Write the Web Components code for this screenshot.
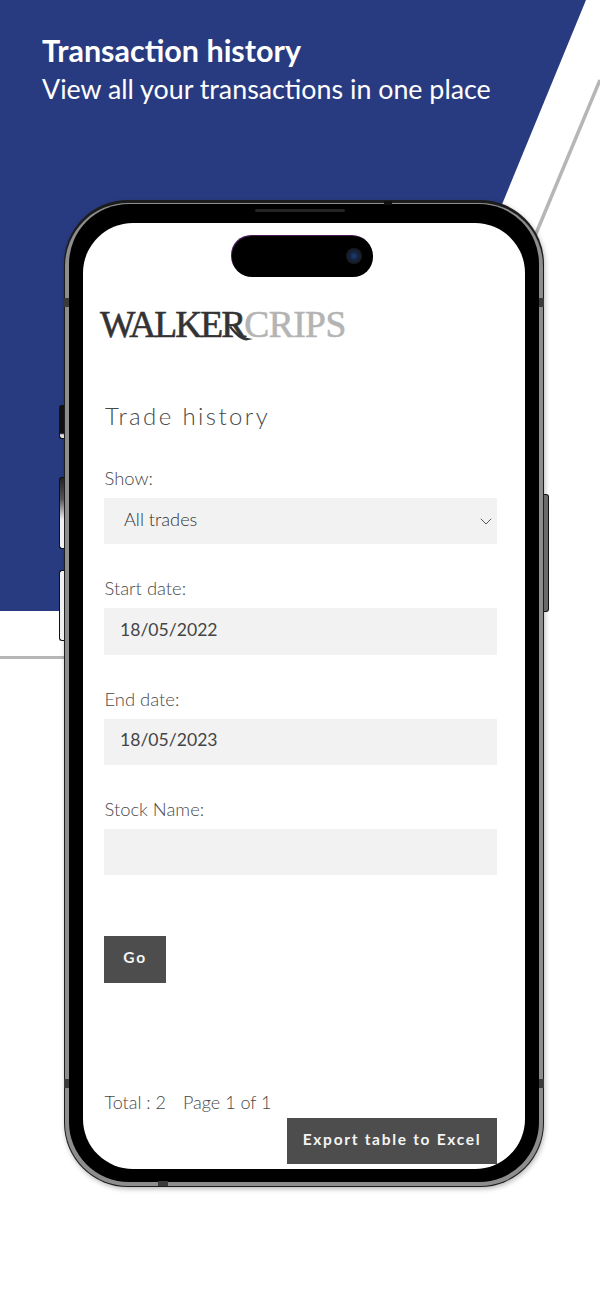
<!DOCTYPE html>
<html lang="en">
<head>
<meta charset="utf-8">
<title>Transaction history</title>
<style>
    html, body { margin: 0; padding: 0; background: #fff; }
    body { font-family: "Lato", "Noto Sans", sans-serif; }
</style>
</head>
<body>
<wc-showcase>
    <span slot="title">Transaction history</span>
    <span slot="subtitle">View all your transactions in one place</span>
    <wc-phone>
        <wc-logo></wc-logo>
        <wc-page-title>Trade history</wc-page-title>
        <wc-field label="Show:" value="All trades" select></wc-field>
        <wc-field label="Start date:" value="18/05/2022"></wc-field>
        <wc-field label="End date:" value="18/05/2023"></wc-field>
        <wc-field label="Stock Name:"></wc-field>
        <wc-button class="go">Go</wc-button>
        <wc-pager total="2" page="1" pages="1"></wc-pager>
        <wc-button class="export">Export table to Excel</wc-button>
    </wc-phone>
</wc-showcase>

<script>
class Showcase extends HTMLElement {
    constructor() {
        super();
        this.attachShadow({mode: 'open'});
        this.shadowRoot.innerHTML = `
            <style>
                :host {
                    display: block;
                    position: relative;
                    width: 600px;
                    height: 1298px;
                    overflow: hidden;
                    background: #fff;
                }
                svg.back {
                    position: absolute;
                    left: 0;
                    top: 0;
                }
                header {
                    position: relative;
                    height: 200px;
                    box-sizing: border-box;
                    padding: 32px 0 0 42px;
                    color: #fff;
                }
                h1, p {
                    margin: 0;
                    white-space: nowrap;
                }
                h1 {
                    font-size: 30.5px;
                    line-height: 37px;
                    font-weight: 700;
                }
                p {
                    font-size: 26.8px;
                    line-height: 40px;
                    font-weight: 400;
                }
                .stage {
                    position: relative;
                    padding-left: 64px;
                }
            </style>
            <svg class="back" width="600" height="1298" viewBox="0 0 600 1298">
                <polygon points="0,0 586,0 335,611 0,611" fill="#293b80"/>
                <line x1="600" y1="80" x2="530" y2="248" stroke="#b6b6b6" stroke-width="3.5"/>
                <line x1="0" y1="657.5" x2="70" y2="657.5" stroke="#b6b6b6" stroke-width="3"/>
            </svg>
            <header>
                <h1><slot name="title"></slot></h1>
                <p><slot name="subtitle"></slot></p>
            </header>
            <div class="stage"><slot></slot></div>`;
    }
}

class Phone extends HTMLElement {
    constructor() {
        super();
        this.attachShadow({mode: 'open'});
        this.shadowRoot.innerHTML = `
            <style>
                :host {
                    display: block;
                    position: relative;
                    width: 480px;
                    height: 987px;
                }
                .frame {
                    box-sizing: border-box;
                    width: 100%;
                    height: 100%;
                    padding: 3px 1px 1px 1px;
                    border-radius: 64px;
                    background: #1c1c1c;
                    box-shadow: 1px 2px 5px rgba(0,0,0,.28);
                }
                .ring {
                    box-sizing: border-box;
                    height: 100%;
                    padding: 1px 4px 4px 4px;
                    border-radius: 63px;
                    background: #8d8d8d;
                }
                .bezel {
                    box-sizing: border-box;
                    height: 100%;
                    padding: 19px 14px 13px 14px;
                    border-radius: 60px;
                    background: #000;
                }
                .screen {
                    box-sizing: border-box;
                    height: 100%;
                    padding: 0 28px 0 21px;
                    border-radius: 50px;
                    background: #fff;
                    overflow: hidden;
                }
                .key {
                    position: absolute;
                    width: 5px;
                    box-sizing: border-box;
                    border: 1.5px solid #111;
                }
                .key.left {
                    left: -5px;
                    border-right: 0;
                    border-radius: 3px 0 0 3px;
                    background: linear-gradient(#222 0, #555 30%, #f1f1f1 60%);
                }
                .key.right {
                    right: -5px;
                    background: #6a6a6a;
                    border-left: 0;
                    border-radius: 0 3px 3px 0;
                }
                .band {
                    position: absolute;
                    background: #3a3a3a;
                }
                .speaker {
                    position: absolute;
                    left: 191px;
                    top: 9px;
                    width: 90px;
                    height: 3px;
                    border-radius: 2px;
                    background: #242424;
                }
                .island {
                    position: absolute;
                    left: 168px;
                    top: 36px;
                    width: 141px;
                    height: 41px;
                    border-radius: 20px;
                    background: #000;
                    box-shadow: -1px -1px 0 #4a1a55;
                }
                .camera {
                    position: absolute;
                    right: 11px;
                    top: 12px;
                    width: 16px;
                    height: 16px;
                    border-radius: 50%;
                    background: radial-gradient(circle, #1f3f78 0, #14223c 40%, #1a1a1f 70%, #000 100%);
                }
            </style>
            <div class="key left" style="top:205px;height:34px;background:linear-gradient(#111 85%,#ddd 90%)"></div>
            <div class="key left" style="top:277px;height:72px"></div>
            <div class="key left" style="top:370px;height:71px;background:#f1f1f1"></div>
            <div class="key right" style="top:294px;height:118px"></div>
            <div class="frame"><div class="ring"><div class="bezel"><div class="screen"><slot></slot></div></div></div></div>
            <div class="band" style="left:0;top:98px;width:5px;height:9px"></div>
            <div class="band" style="right:0;top:98px;width:5px;height:9px"></div>
            <div class="band" style="left:0;top:879px;width:5px;height:9px"></div>
            <div class="band" style="right:0;top:879px;width:5px;height:9px"></div>
            <div class="band" style="left:94px;bottom:1px;width:10px;height:5px"></div>
            <div class="band" style="right:152px;top:1px;width:8px;height:4px;background:#111"></div>
            <div class="speaker"></div>
            <div class="island"><div class="camera"></div></div>`;
    }
}

class Logo extends HTMLElement {
    constructor() {
        super();
        this.attachShadow({mode: 'open'});
        this.shadowRoot.innerHTML = `
            <style>
                :host {
                    display: block;
                    position: relative;
                    height: 50px;
                    margin: 77px 0 0 -4px;
                    font-family: "Liberation Serif", serif;
                    font-size: 37.5px;
                    line-height: 50px;
                    white-space: nowrap;
                    -webkit-text-stroke: .6px currentColor;
                }
                .walker { color: #333; letter-spacing: -2px; }
                .crips { color: #b4b4b4; letter-spacing: -.55px; }
                svg {
                    position: absolute;
                    left: 129px;
                    top: 26px;
                }
            </style>
            <span class="walker">WALKER</span><span class="crips">CRIPS</span>
            <svg width="30" height="16" viewBox="0 0 30 16">
                <path d="M2 0 C6 5 12 12 24 13 L17 14.5 C9 13 4 6 0 1 Z" fill="#333"/>
            </svg>`;
    }
}

class PageTitle extends HTMLElement {
    constructor() {
        super();
        this.attachShadow({mode: 'open'});
        this.shadowRoot.innerHTML = `
            <style>
                :host {
                    display: block;
                    margin: 48px 0 32px 1px;
                    font-size: 24px;
                    line-height: 36px;
                    font-weight: 300;
                    letter-spacing: 2.4px;
                    color: #484848;
                }
            </style>
            <slot></slot>`;
    }
}

class Field extends HTMLElement {
    constructor() {
        super();
        this.attachShadow({mode: 'open'});
        this.shadowRoot.innerHTML = `
            <style>
                :host {
                    display: block;
                    margin-bottom: 32px;
                }
                label {
                    display: block;
                    height: 24px;
                    margin: 0 0 8px .5px;
                    font-size: 18.4px;
                    line-height: 24px;
                    font-weight: 300;
                    color: #484848;
                }
                .box {
                    display: flex;
                    align-items: center;
                    justify-content: space-between;
                    box-sizing: border-box;
                    height: 46.3px;
                    padding: 0 5px 4px 16px;
                    background: #f2f2f2;
                    font-size: 17.6px;
                    color: #444;
                }
                :host([select]) .box { padding-left: 20px; font-size: 18.2px; font-weight: 300; color: #333; }
                svg { display: none; }
                :host([select]) svg { display: block; margin-top: 4px; }
            </style>
            <label></label>
            <div class="box">
                <span class="value"></span>
                <svg width="12" height="7" viewBox="0 0 12 7"><path d="M.8 .8 6 6 11.2 .8" fill="none" stroke="#555" stroke-width="1"/></svg>
            </div>`;
    }

    connectedCallback() {
        this.shadowRoot.querySelector('label').textContent = this.getAttribute('label');
        this.shadowRoot.querySelector('.value').textContent = this.getAttribute('value') || '';
    }
}

class Button extends HTMLElement {
    constructor() {
        super();
        this.attachShadow({mode: 'open'});
        this.shadowRoot.innerHTML = `
            <style>
                :host {
                    display: flex;
                    align-items: center;
                    justify-content: center;
                    box-sizing: border-box;
                    height: 46.5px;
                    padding-bottom: 4px;
                    background: #4d4d4d;
                    color: #f4f4f4;
                    font-size: 15.5px;
                    font-weight: 700;
                    letter-spacing: 1.7px;
                    white-space: nowrap;
                }
                :host(.go) {
                    width: 62px;
                    margin-top: 61px;
                }
                :host(.export) {
                    width: 210px;
                    margin: 4px 0 0 auto;
                }
            </style>
            <slot></slot>`;
    }
}

class Pager extends HTMLElement {
    constructor() {
        super();
        this.attachShadow({mode: 'open'});
        this.shadowRoot.innerHTML = `
            <style>
                :host {
                    display: flex;
                    gap: 17px;
                    margin-top: 107px;
                    margin-left: .5px;
                    font-size: 18px;
                    line-height: 24px;
                    font-weight: 300;
                    color: #484848;
                }
            </style>
            <span class="total"></span>
            <span class="page"></span>`;
    }

    connectedCallback() {
        this.shadowRoot.querySelector('.total').textContent = 'Total : ' + this.getAttribute('total');
        this.shadowRoot.querySelector('.page').textContent = 'Page ' + this.getAttribute('page') + ' of ' + this.getAttribute('pages');
    }
}

customElements.define('wc-showcase', Showcase);
customElements.define('wc-phone', Phone);
customElements.define('wc-logo', Logo);
customElements.define('wc-page-title', PageTitle);
customElements.define('wc-field', Field);
customElements.define('wc-button', Button);
customElements.define('wc-pager', Pager);
</script>
</body>
</html>
